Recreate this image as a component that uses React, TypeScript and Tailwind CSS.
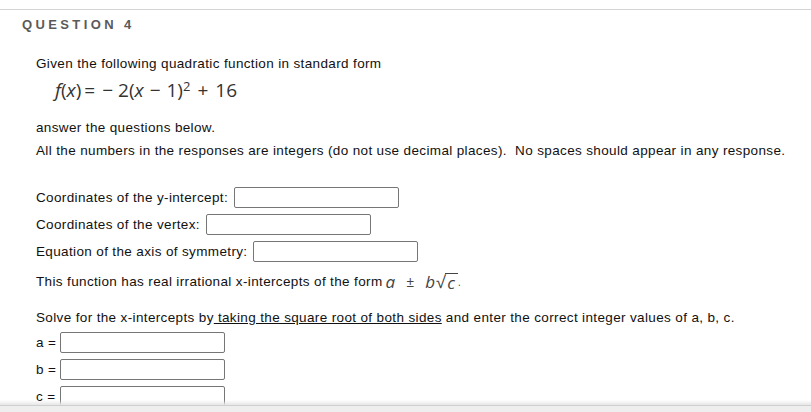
import React from 'react'

const sans = { fontFamily: '"Liberation Sans", Arial, sans-serif' }
const math = { fontFamily: '"Open Sans", "DejaVu Sans", sans-serif' }

const Box = ({ className = '' }: { className?: string }) => (
  <input
    type="text"
    className={`h-[21px] w-[165px] rounded-[2px] border border-[#767676] bg-white px-1 text-[13px] outline-none ${className}`}
  />
)

const Row = ({ label, top }: { label: string; top: string }) => (
  <div className={`flex items-center ${top}`}>
    <span className="leading-[21px]">{label}</span>
    <Box className="ml-[6px]" />
  </div>
)

const VarRow = ({ name, top }: { name: string; top: string }) => (
  <div className={`flex items-center ${top}`}>
    <span className="w-[24px] leading-[21px]">{name} =</span>
    <Box />
  </div>
)

export default function App() {
  return (
    <div className="relative h-[412px] w-[811px] overflow-hidden bg-white text-[13.5px] tracking-[0.36px] text-[#111]" style={sans}>
      <div className="mt-[9px] border-t border-[#d4d4d4]" />
      <div className="pl-[22px] pt-[7px] text-[13px] font-bold leading-[16px] tracking-[0.26em] text-[#5a5a5a]">
        QUESTION 4
      </div>

      <div className="pl-[36px]">
        <p className="mt-[23px] leading-[16px]">Given the following quadratic function in standard form</p>
        <div className="mt-[6px] pl-[19px] text-[19px] leading-[24px] tracking-normal text-[#333]" style={math}>
          <i>f</i>(<i>x</i>)<span className="ml-[3px]">=</span>
          <span className="ml-[7px]">−</span>
          <span className="ml-[5px]">2(</span>
          <i>x</i>
          <span className="mx-[6px]">−</span>1)<sup className="text-[13px]">2</sup>
          <span className="mx-[7px]">+</span>16
        </div>

        <p className="mt-[18px] leading-[16px]">answer the questions below.</p>
        <p className="mt-[7px] leading-[16px]">
          All the numbers in the responses are integers (do not use decimal places).&nbsp; No spaces should appear in any response.
        </p>

        <Row label="Coordinates of the y-intercept:" top="mt-[28px]" />
        <Row label="Coordinates of the vertex:" top="mt-[6px]" />
        <Row label="Equation of the axis of symmetry:" top="mt-[6px]" />

        <div className="mt-[11px] flex items-end leading-[18px]">
          <span>This function has real irrational x-intercepts of the form</span>
          <span className="ml-[3px] flex items-end text-[17px] tracking-normal text-[#444]" style={math}>
            <i>a</i>
            <span className="mx-[11px] text-[14px]">±</span>
            <i>b</i>
            <span className="ml-[1px] text-[17px]">√</span>
            <span className="border-t border-[#444] pl-[2px] pr-[3px] leading-[17px]">
              <i>c</i>
            </span>
            <span className="text-[10px]">.</span>
          </span>
        </div>

        <p className="mt-[19px] leading-[16px]">
          Solve for the x-intercepts by<span className="underline"> taking the square root of both sides</span> and enter the correct integer values of a, b, c.
        </p>

        <VarRow name="a" top="mt-[6px]" />
        <VarRow name="b" top="mt-[6px]" />
        <VarRow name="c" top="mt-[6px]" />
      </div>

      <div className="absolute bottom-0 left-0 right-0">
        <div className="h-[5px] bg-gradient-to-b from-transparent to-[#e6e6e6]" />
        <div className="h-[7px] border-t border-[#cfcfcf] bg-[#eeeeee]" />
      </div>
    </div>
  )
}
